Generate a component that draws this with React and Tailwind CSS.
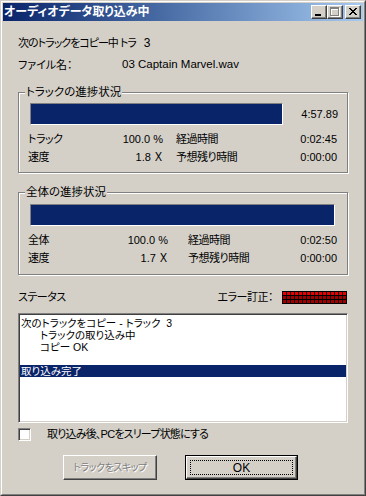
import React from "react";

const FONT =
  "font-['Liberation_Sans','Noto_Sans_CJK_JP',sans-serif] [font-feature-settings:'palt']";

// ── キャプションボタン ────────────────────────────
function CapBtn({ children, className = "" }) {
  return (
    <div
      className={`flex h-[14px] w-[16px] items-center justify-center border border-t-white border-l-white border-r-[#404040] border-b-[#404040] bg-[#d4d0c8] shadow-[inset_-1px_-1px_0_#808080] ${className}`}
    >
      {children}
    </div>
  );
}

function CloseGlyph() {
  const rows = [0, 1, 2, 3, 4, 5, 6];
  return (
    <svg width="14" height="12" viewBox="0 0 14 12" shapeRendering="crispEdges">
      {rows.map((i) => (
        <g key={i}>
          <rect x={3 + i} y={2 + i} width="2" height="1" fill="#000" />
          <rect x={9 - i} y={2 + i} width="2" height="1" fill="#000" />
        </g>
      ))}
    </svg>
  );
}

function GroupBox({ title, children, className = "" }) {
  return (
    <div
      className={`relative border border-[#808080] shadow-[inset_1px_1px_0_#fff,1px_1px_0_#fff] ${className}`}
    >
      <span className="absolute -top-[8px] left-[6px] bg-[#d4d0c8] px-[1px] text-[11.5px] leading-[14px]">
        {title}
      </span>
      {children}
    </div>
  );
}

function Bar({ className = "" }) {
  return (
    <div
      className={`h-[22px] border border-[#808080] border-r-white border-b-white bg-[#0a246a] ${className}`}
    />
  );
}

function StatRow({ label, value, label2, value2, w1, w2, gap }) {
  return (
    <div className="flex h-[18px] items-center pl-[9px]">
      <div className={`flex justify-between ${w1}`}>
        <span className="tracking-[-0.5px]">{label}</span>
        <span>{value}</span>
      </div>
      <div className={`flex justify-between ${gap} ${w2}`}>
        <span className="tracking-[-0.5px]">{label2}</span>
        <span>{value2}</span>
      </div>
    </div>
  );
}

export default function App() {
  const cells = Array.from({ length: 48 }, (_, i) => i);

  return (
    <div
      className={`h-[496px] w-[366px] overflow-hidden border border-[#d4d0c8] border-r-[#404040] border-b-[#404040] bg-[#d4d0c8] text-[11px] text-black ${FONT}`}
    >
      <div className="h-full border border-white border-r-[#808080] border-b-[#808080] p-px">
        {/* タイトルバー */}
        <div className="flex h-[18px] items-center bg-gradient-to-r from-[#0a246a] to-[#a6caf0] pr-[2px] pl-[1px]">
          <span className="flex-1 text-[12px] leading-none font-bold text-white">
            オーディオデータ取り込み中
          </span>
          <CapBtn>
            <svg width="14" height="12" viewBox="0 0 14 12" shapeRendering="crispEdges">
              <rect x="3" y="8" width="6" height="2" fill="#000" />
            </svg>
          </CapBtn>
          <CapBtn>
            <svg width="14" height="12" viewBox="0 0 14 12" shapeRendering="crispEdges">
              <path d="M3 2h9v9h-9z M4 4h7v6h-7z" fill="#fff" fillRule="evenodd" />
              <path d="M2 1h9v9h-9z M3 3h7v6h-7z" fill="#808080" fillRule="evenodd" />
            </svg>
          </CapBtn>
          <CapBtn className="ml-[2px]">
            <CloseGlyph />
          </CapBtn>
        </div>

        <div className="px-[15px]">
          <div className="mt-[14px] flex h-[16px] items-center whitespace-nowrap">
            <span className="shrink-0 tracking-[-1px]">次のトラックをコピー中 トラ</span>
            <span className="ml-[8px] text-[12px]">3</span>
          </div>
          <div className="mt-[6px] flex h-[16px] items-center whitespace-nowrap">
            <span className="w-[104px]">ファイル名：</span>
            <span className="text-[11.5px]">03 Captain Marvel.wav</span>
          </div>

          {/* トラックの進捗状況 */}
          <GroupBox title="トラックの進捗状況" className="mt-[19px] pb-[6px]">
            <div className="mt-[10px] flex items-center pr-[9px] pl-[11px]">
              <Bar className="w-[253px]" />
              <span className="flex-1 text-right">4:57.89</span>
            </div>
            <div className="mt-[5px]">
              <StatRow
                label="トラック"
                value="100.0 %"
                label2="経過時間"
                value2="0:02:45"
                w1="w-[135px]"
                w2="w-[161px]"
                gap="ml-[13px]"
              />
              <StatRow
                label="速度"
                value="1.8 Ｘ"
                label2="予想残り時間"
                value2="0:00:00"
                w1="w-[135px]"
                w2="w-[161px]"
                gap="ml-[13px]"
              />
            </div>
          </GroupBox>

          {/* 全体の進捗状況 */}
          <GroupBox title="全体の進捗状況" className="mt-[19px] pb-[7px]">
            <div className="mt-[11px] pr-[11px] pl-[11px]">
              <Bar className="w-[305px]" />
            </div>
            <div className="mt-[5px]">
              <StatRow
                label="全体"
                value="100.0 %"
                label2="経過時間"
                value2="0:02:50"
                w1="w-[140px]"
                w2="w-[149px]"
                gap="ml-[20px]"
              />
              <StatRow
                label="速度"
                value="1.7 Ｘ"
                label2="予想残り時間"
                value2="0:00:00"
                w1="w-[140px]"
                w2="w-[149px]"
                gap="ml-[20px]"
              />
            </div>
          </GroupBox>

          {/* ステータス */}
          <div className="mt-[14px] flex h-[16px] items-center">
            <span className="flex-1 tracking-[-0.5px]">ステータス</span>
            <span className="mr-[9px] tracking-[-0.5px]">エラー訂正：</span>
            <div className="mr-px grid h-[13px] w-[65px] grid-cols-16 gap-px bg-black p-px">
              {cells.map((i) => (
                <div key={i} className={i < 16 ? "bg-[#e80000]" : "bg-[#a00000]"} />
              ))}
            </div>
          </div>

          <div className="mt-[8px] h-[110px] border border-[#808080] border-r-white border-b-white bg-white shadow-[inset_1px_1px_0_#404040,inset_-1px_-1px_0_#d4d0c8]">
            <div className="pt-[3px] pr-[1px] pl-px text-[10.5px] leading-[12px] whitespace-nowrap">
              <div className="pl-px">次のトラックをコピー - トラック&nbsp;&nbsp;3</div>
              <div className="pl-[20px]">トラックの取り込み中</div>
              <div className="pl-[20px]">コピー OK</div>
              <div className="h-[12px]" />
              <div className="bg-[#0a246a] pl-px text-white">取り込み完了</div>
            </div>
          </div>

          <div className="mt-[5px] flex h-[13px] items-center">
            <div className="h-[13px] w-[13px] border border-[#808080] border-r-white border-b-white bg-white shadow-[inset_1px_1px_0_#404040,inset_-1px_-1px_0_#d4d0c8]" />
            <span className="ml-[16px] tracking-[-0.8px] whitespace-nowrap">
              取り込み後、PCをスリープ状態にする
            </span>
          </div>

          <div className="mt-[14px] flex">
            <div className="ml-[45px] flex h-[25px] w-[94px] items-center justify-center border border-t-white border-l-white border-r-[#404040] border-b-[#404040] text-[10px] tracking-[-0.5px] whitespace-nowrap text-[#808080] shadow-[inset_-1px_-1px_0_#808080] [text-shadow:1px_1px_0_#fff]">
              トラックをスキップ
            </div>
            <div className="ml-[28px] h-[25px] w-[113px] border border-black">
              <div className="relative flex h-full items-center justify-center border border-t-white border-l-white border-r-[#404040] border-b-[#404040] text-[12px] shadow-[inset_-1px_-1px_0_#808080]">
                <div className="absolute inset-[3px] border border-dotted border-black" />
                OK
              </div>
            </div>
          </div>
        </div>
      </div>
    </div>
  );
}
